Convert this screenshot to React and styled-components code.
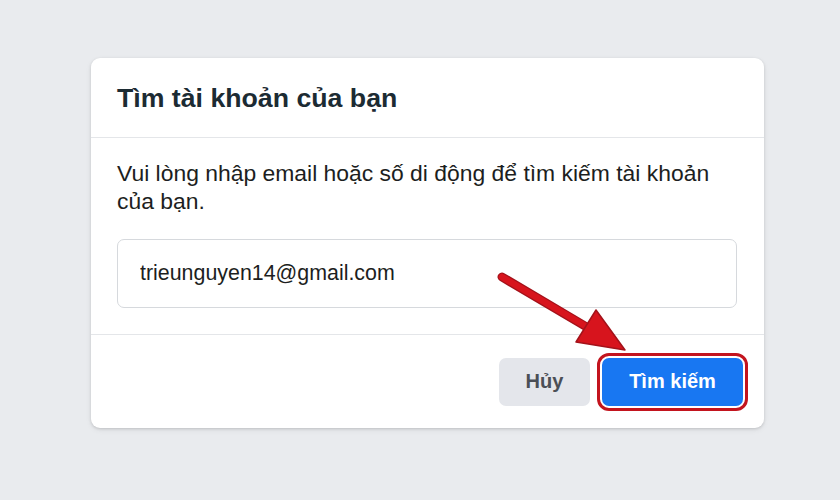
import React from "react";
import styled, { createGlobalStyle } from "styled-components";

const Global = createGlobalStyle`
  html, body { margin: 0; padding: 0; background: #e9ebee; }
  * { box-sizing: border-box; }
`;

const Page = styled.div`
  position: relative;
  width: 840px;
  height: 500px;
  overflow: hidden;
  background: #e9ebee;
  padding: 58px 0 0 91px;
  font-family: "Liberation Sans", Arial, sans-serif;
`;

const Card = styled.div`
  width: 673px;
  height: 370px;
  background: #fff;
  border-radius: 9px;
  box-shadow: 0 1px 3px rgba(0, 0, 0, 0.14), 0 2px 6px rgba(0, 0, 0, 0.06);
  display: flex;
  flex-direction: column;
`;

const Header = styled.div`
  height: 80px;
  padding: 0 26px;
  display: flex;
  align-items: center;
  border-bottom: 1px solid #e4e6e9;
`;

const Title = styled.h2`
  margin: 0;
  font-size: 26.7px;
  font-weight: bold;
  color: #1c2b33;
  line-height: 32px;
`;

const Body = styled.div`
  padding: 21px 27px 26px 26px;
  display: flex;
  flex-direction: column;
  gap: 24px;
  border-bottom: 1px solid #e4e6e9;
`;

const Text = styled.p`
  margin: 0;
  font-size: 22.9px;
  line-height: 28px;
  color: #1c1e21;
`;

const Input = styled.input`
  height: 69px;
  width: 100%;
  border: 1px solid #d6d9dd;
  border-radius: 7px;
  padding: 0 22px;
  font-family: "Liberation Sans", Arial, sans-serif;
  font-size: 21.4px;
  color: #1c1e21;
  background: #fff;
  outline: none;
`;

const Footer = styled.div`
  flex: 1;
  display: flex;
  align-items: center;
  justify-content: flex-end;
  gap: 12px;
  padding: 0 21px 0 0;
`;

const Button = styled.button`
  height: 48px;
  width: ${(p) => p.$w}px;
  border: none;
  border-radius: 7px;
  font-family: "Liberation Sans", Arial, sans-serif;
  font-weight: bold;
  font-size: 20px;
  background: ${(p) => (p.$primary ? "#1877f2" : "#e4e6eb")};
  color: ${(p) => (p.$primary ? "#fff" : "#4b4f56")};
  outline: ${(p) => (p.$highlight ? "3px solid #c3141e" : "none")};
  outline-offset: 2px;
`;

const ArrowLayer = styled.svg`
  position: absolute;
  left: 0;
  top: 0;
  pointer-events: none;
`;

export default function App() {
  return (
    <>
      <Global />
      <Page>
        <Card>
          <Header>
            <Title>Tìm tài khoản của bạn</Title>
          </Header>
          <Body>
            <Text>
              Vui lòng nhập email hoặc số di động để tìm kiếm tài khoản của bạn.
            </Text>
            <Input defaultValue="trieunguyen14@gmail.com" />
          </Body>
          <Footer>
            <Button $w={91}>Hủy</Button>
            <Button $w={141} $primary $highlight>
              Tìm kiếm
            </Button>
          </Footer>
        </Card>
        <ArrowLayer width="840" height="500" viewBox="0 0 840 500">
          <line
            x1="502"
            y1="277"
            x2="590"
            y2="329"
            stroke="#a3121a"
            strokeWidth="9"
            strokeLinecap="round"
          />
          <line
            x1="502"
            y1="277"
            x2="592"
            y2="330"
            stroke="#d7141d"
            strokeWidth="6.5"
            strokeLinecap="round"
          />
          <polygon
            points="576,342 596,310 625,350"
            fill="#d7141d"
            stroke="#a3121a"
            strokeWidth="1.5"
            strokeLinejoin="round"
          />
        </ArrowLayer>
      </Page>
    </>
  );
}
